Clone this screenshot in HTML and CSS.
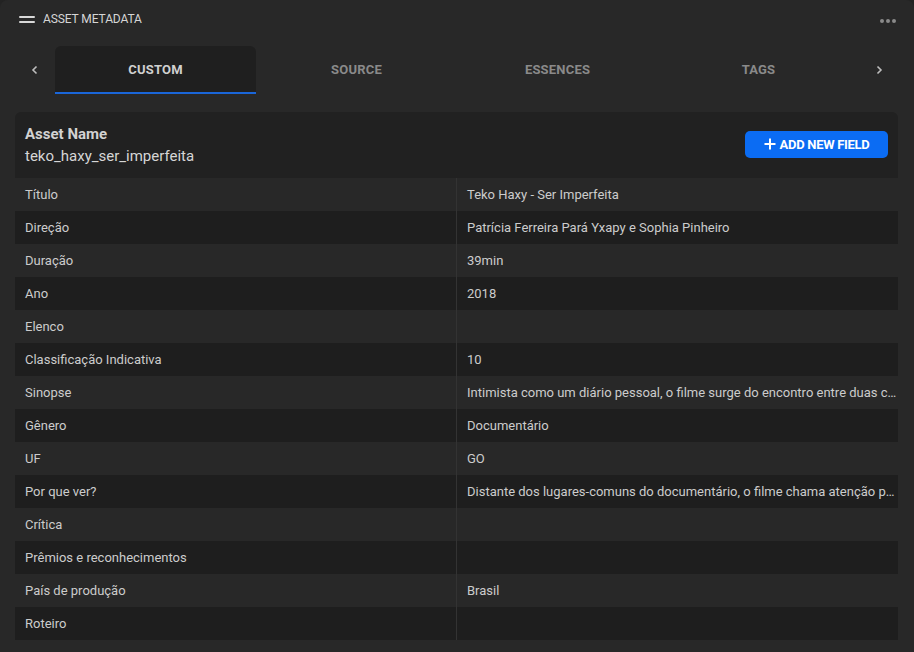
FILE: index.html
```html
<!DOCTYPE html>
<html>
<head>
<meta charset="utf-8">
<link rel="stylesheet" href="styles.css">
</head>
<body>
<div class="panel">
  <div class="topbar">
    <div class="title">
      <span class="burger"><i></i><i></i></span>
      <span class="title-text">ASSET METADATA</span>
    </div>
    <span class="dots"><i></i><i></i><i></i></span>
  </div>
  <div class="tabs">
    <button class="arrow"><svg width="10" height="10" viewBox="0 0 10 10"><path d="M6.5 1.5 L3 5 L6.5 8.5" fill="none" stroke="#bdbdbd" stroke-width="1.6"/></svg></button>
    <div class="tab active">CUSTOM</div>
    <div class="tab">SOURCE</div>
    <div class="tab">ESSENCES</div>
    <div class="tab">TAGS</div>
    <button class="arrow"><svg width="10" height="10" viewBox="0 0 10 10"><path d="M3.5 1.5 L7 5 L3.5 8.5" fill="none" stroke="#bdbdbd" stroke-width="1.6"/></svg></button>
  </div>
  <div class="card">
    <div class="card-head">
      <div class="name">
        <div class="name-label">Asset Name</div>
        <div class="name-value">teko_haxy_ser_imperfeita</div>
      </div>
      <button class="add"><svg width="12" height="12" viewBox="0 0 12 12"><path d="M6 0.5 V11.5 M0.5 6 H11.5" stroke="#fff" stroke-width="2"/></svg>ADD NEW FIELD</button>
    </div>
    <div class="rows">
      <div class="row"><div class="k">Título</div><div class="v">Teko Haxy - Ser Imperfeita</div></div>
      <div class="row"><div class="k">Direção</div><div class="v">Patrícia Ferreira Pará Yxapy e Sophia Pinheiro</div></div>
      <div class="row"><div class="k">Duração</div><div class="v">39min</div></div>
      <div class="row"><div class="k">Ano</div><div class="v">2018</div></div>
      <div class="row"><div class="k">Elenco</div><div class="v"></div></div>
      <div class="row"><div class="k">Classificação Indicativa</div><div class="v">10</div></div>
      <div class="row"><div class="k">Sinopse</div><div class="v">Intimista como um diário pessoal, o filme surge do encontro entre duas cineastas, uma indígena e outra não indígena</div></div>
      <div class="row"><div class="k">Gênero</div><div class="v">Documentário</div></div>
      <div class="row"><div class="k">UF</div><div class="v">GO</div></div>
      <div class="row"><div class="k">Por que ver?</div><div class="v">Distante dos lugares-comuns do documentário, o filme chama atenção para a relação entre as duas diretoras</div></div>
      <div class="row"><div class="k">Crítica</div><div class="v"></div></div>
      <div class="row"><div class="k">Prêmios e reconhecimentos</div><div class="v"></div></div>
      <div class="row"><div class="k">País de produção</div><div class="v">Brasil</div></div>
      <div class="row"><div class="k">Roteiro</div><div class="v"></div></div>
    </div>
  </div>
</div>
</body>
</html>
```
FILE: styles.css
```css
* { box-sizing: border-box; }
html, body { margin: 0; padding: 0; background: #232323; }
body { font-family: Roboto, "Liberation Sans", Arial, sans-serif; color: #cfcfcf; }
.panel {
  width: 914px; height: 652px; background: #282828;
  border-radius: 8px 8px 0 0; overflow: hidden;
  display: flex; flex-direction: column;
}
.topbar {
  height: 38px; display: flex; align-items: center; justify-content: space-between;
  padding: 0 18px 0 19px;
}
.title { display: flex; align-items: center; gap: 8px; }
.burger { display: flex; flex-direction: column; gap: 3px; width: 16px; }
.burger i { display: block; height: 2px; background: #d8d8d8; border-radius: 1px; }
.title-text { font-size: 12px; color: #d6d6d6; letter-spacing: -0.1px; }
.dots { display: flex; gap: 2px; margin-top: 4px; }
.dots i { display: block; width: 4px; height: 4px; border-radius: 50%; background: #8a8a8a; }
.tabs {
  display: flex; align-items: stretch; height: 48px; margin-top: 8px;
  padding: 0 15px 0 25px;
}
.arrow {
  width: 20px; border: 0; background: none; padding: 0; margin: 0;
  display: flex; align-items: center; justify-content: center;
}
.arrow:first-child { margin-right: 10px; }
.arrow:last-child { margin-left: 10px; margin-right: 0; }
.tab {
  width: 201px; display: flex; align-items: center; justify-content: center;
  font-size: 13px; font-weight: 700; color: #8a8a8a; letter-spacing: 0.2px;
  border-bottom: 2px solid transparent; padding-bottom: 0;
}
.tab.active {
  background: #1f1f1f; color: #d0d0d0; border-bottom-color: #1a66d9;
  border-radius: 6px 6px 0 0;
}
.card { margin: 18px 16px 0 15px; }
.card-head {
  height: 66px; background: #212121; border-radius: 6px 6px 0 0;
  display: flex; align-items: center; justify-content: space-between;
  padding: 0 10px 0 10px;
}
.name { display: flex; flex-direction: column; gap: 4px; margin-top: -1px; }
.name-label { font-size: 15px; font-weight: 700; color: #d2d2d2; }
.name-value { font-size: 15px; color: #d6d6d6; }
.add {
  height: 27px; width: 143px; border: 0; border-radius: 5px; background: #0b6cf3;
  color: #fff; font-family: inherit; font-size: 13px; font-weight: 700;
  display: flex; align-items: center; justify-content: center; gap: 4px;
  letter-spacing: -0.3px; margin-top: -2px; padding: 0;
}
.rows { display: flex; flex-direction: column; }
.row { display: grid; grid-template-columns: 442px 1fr; height: 33px; background: #282828; }
.row:nth-child(even) { background: #1e1e1e; }
.k, .v {
  display: flex; align-items: center; font-size: 13px; color: #cccccc;
  white-space: nowrap; overflow: hidden;
}
.k { padding-left: 10px; border-right: 1px solid #333333; }
.v { padding-left: 10px; padding-right: 0; display: block; line-height: 33px; text-overflow: ellipsis; }
```
